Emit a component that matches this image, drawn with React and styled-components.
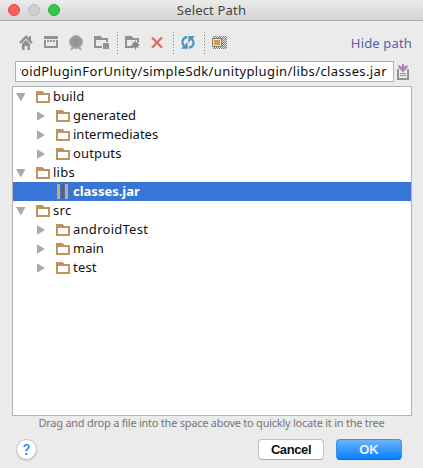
import React from "react";
import styled, { createGlobalStyle, css } from "styled-components";

const GlobalStyle = createGlobalStyle`
  * { box-sizing: border-box; }
  html, body { margin: 0; padding: 0; background: #ebebeb; overflow: hidden; }
  svg { display: block; flex: none; }
`;

const Dialog = styled.main`
  width: 423px;
  height: 468px;
  display: flex;
  flex-direction: column;
  background: #ebebeb;
  color: #111;
  font: 13px/19px "Noto Sans", "Open Sans", sans-serif;
  white-space: nowrap;
  overflow: hidden;
`;

const TitleBar = styled.header`
  height: 21px;
  flex: none;
  display: grid;
  grid-template-columns: 60px 1fr 60px;
  align-items: center;
  padding: 0 8px;
  background: linear-gradient(#ececec, #d4d4d4);
  border-bottom: 1px solid #b1b1b1;
  border-radius: 4px 4px 0 0;
`;

const Lights = styled.div`
  display: flex;
  gap: 8px;
`;

const Light = styled.span`
  width: 12px;
  height: 12px;
  border-radius: 50%;
  background: ${(p) => p.$fill};
  border: 1px solid ${(p) => p.$edge};
`;

const Title = styled.h1`
  margin: 0;
  text-align: center;
  font: 400 13px/20px "Noto Sans", sans-serif;
  letter-spacing: 0.18px;
  color: #444;
`;

const Toolbar = styled.div`
  height: 40px;
  flex: none;
  display: flex;
  align-items: center;
  padding: 4px 11px 0 19px;
`;

const Tool = styled.span`
  display: flex;
  width: 16px;
  height: 16px;
  margin-right: ${(p) => p.$gap ?? 9}px;
`;

const Separator = styled.i`
  width: 1px;
  height: 23px;
  margin-right: ${(p) => p.$gap}px;
  background: repeating-linear-gradient(#858585 0 1px, transparent 1px 3px);
`;

const HidePath = styled.a`
  margin-left: auto;
  color: #5660a5;
  letter-spacing: 0.16px;
`;

const PathRow = styled.div`
  display: flex;
  flex: none;
  height: 21px;
  align-items: center;
  padding-left: 15px;
  gap: 3px;
`;

const PathField = styled.div`
  width: 379px;
  height: 21px;
  padding: 0 6px 0 4px;
  background: #fff;
  border: 1px solid #b0b0b0;
`;

const PathText = styled.span`
  display: flex;
  justify-content: flex-end;
  width: 100%;
  overflow: hidden;
  letter-spacing: 0.38px;
`;

const Tree = styled.ul`
  list-style: none;
  width: 400px;
  height: 330px;
  flex: none;
  margin: 4px 0 0 12px;
  padding: 0;
  background: #fff;
  border: 1px solid #b4b4b4;
`;

const Row = styled.li`
  height: 19px;
  display: flex;
  align-items: center;
  padding-left: ${(p) => 3 + p.$depth * 20}px;
  ${(p) =>
    p.$selected &&
    css`
      background: #3875d7;
      color: #fff;
      font-weight: 700;
    `}
`;

const Name = styled.span`
  margin-left: 3px;
  line-height: 19px;
  letter-spacing: ${(p) => p.$track ?? 0}px;
`;

const Hint = styled.p`
  margin: 0;
  height: 15px;
  text-align: center;
  font-size: 11px;
  line-height: 13px;
  letter-spacing: -0.245px;
  color: #777;
`;

const Footer = styled.footer`
  display: flex;
  align-items: center;
  padding: 8px 21px 0 16px;
  gap: 12px;
`;

const Help = styled.button`
  width: 21px;
  height: 21px;
  padding: 0;
  margin-right: auto;
  border: 1px solid #c2c2c2;
  border-radius: 50%;
  background: #fff;
  box-shadow: 0 1px 1px #ccc;
  color: #1681fb;
  font: 500 14px/18px "Inter", sans-serif;
`;

const Button = styled.button`
  width: 66px;
  height: 21px;
  padding: 0;
  border-radius: 4px;
  border: 1px solid ${(p) => (p.$primary ? "#3e91ed" : "#c0c0c0")};
  border-bottom-color: ${(p) => (p.$primary ? "#0869e0" : "#a9a9a9")};
  background: ${(p) => (p.$primary ? "linear-gradient(#6cb3fa, #087eff)" : "#fff")};
  color: ${(p) => (p.$primary ? "#e9f3ff" : "#111")};
  font: 700 13px/20px "Liberation Sans", sans-serif;
  letter-spacing: ${(p) => (p.$primary ? 0 : -0.4)}px;
`;

const Icon = ({ children, w = 16, h = 16, crisp = true }) => (
  <svg width={w} height={h} viewBox={`0 0 ${w} ${h}`} shapeRendering={crisp ? "crispEdges" : "auto"}>
    {children}
  </svg>
);

const GREY = "#929292";

const HomeIcon = () => (
  <Icon crisp={false}>
    <path d="M1 8 7 1.8 13 8" fill="none" stroke={GREY} strokeWidth="2.4" />
    <path d="M10 1h2v5h-2zM3 8.5l4-4L11 8.5V15H8.5v-4h-3v4H3z" fill={GREY} />
    <path d="M2 9.4 7 4.4l5 5" fill="none" stroke="#d0d0d0" strokeWidth=".8" />
  </Icon>
);

const ProjectIcon = () => (
  <Icon>
    <path d="M0 1h14v3H0zM0 5h2v6h10V5h2v8H0zM3 5h2v2H3zM6 5h2v2H6zM9 5h2v2H9z" fill={GREY} />
  </Icon>
);

const ModuleIcon = () => (
  <Icon crisp={false}>
    <circle cx="7" cy="7" r="6.4" fill="#9a9a9a" stroke="#aaa" />
    <path d="M3 12 1 15h2l2-2zM11 12l2 3h-2l-2-2z" fill="#a4a4a4" />
    <path d="M7 3.8 4.8 6M7 3.8 9.2 6M7 5v6" fill="none" stroke="#8a8a8a" strokeWidth="1" />
  </Icon>
);

const FolderOutline = () => <path d="M0 1h6l2 2h6v4h-2V5H2v6h6v2H0z" fill={GREY} />;

const FolderIcon = () => (
  <Icon>
    <FolderOutline />
    <path d="M9 8h6v6H9z" fill={GREY} />
  </Icon>
);

const NewFolderIcon = () => (
  <Icon>
    <FolderOutline />
    <g shapeRendering="auto">
      <circle cx="10.5" cy="10" r="2.8" fill="#858585" />
      <path d="M10.5 5.5v9M6 10h9M7.3 6.8l6.4 6.4M13.7 6.8l-6.4 6.4" stroke="#858585" />
    </g>
  </Icon>
);

const DeleteIcon = () => (
  <Icon crisp={false}>
    <path d="m2 2.5 10 10.2M12 2.5 2 12.7" stroke="#dd6b5b" strokeWidth="2.3" />
  </Icon>
);

const RefreshIcon = () => (
  <Icon crisp={false}>
    <path d="M6.2 2.2C1.2 2.5.2 8 3.3 11.2" fill="none" stroke="#4e94c0" strokeWidth="2.2" />
    <path d="M0 13.8h6.7V7z" fill="#4e94c0" />
    <path d="M7.8 12.7c5-.3 6-5.8 2.9-9" fill="none" stroke="#4e94c0" strokeWidth="2.2" />
    <path d="M14 1H7.3v6.8z" fill="#4e94c0" />
  </Icon>
);

const HiddenIcon = () => (
  <Icon>
    <defs>
      <pattern id="checks" width="2" height="2" patternUnits="userSpaceOnUse">
        <path d="M0 0h1v1H0zM1 1h1v1H1z" fill="#777" />
      </pattern>
    </defs>
    <path d="M1 1h14v13H1z" fill="url(#checks)" />
    <path d="M0 3h10v9H0z" fill="#817b76" />
    <path d="M1 4h8v7H1z" fill="#eee1c9" />
    <path d="M2 5h6v5H2z" fill="#d09a52" />
  </Icon>
);

const HistoryIcon = () => (
  <Icon w={12} h={17}>
    <path d="M0 6h2v9h8V6h2v11H0zM3 10h6v1H3zM3 12h6v1H3z" fill="#929292" />
    <path d="M5 1h2v3l3-2 1 2-5 5.5L1 4l1-2 3 2z" fill="#a784bd" shapeRendering="auto" />
  </Icon>
);

const TreeFolder = () => (
  <Icon w={14} h={12}>
    <path d="M0 0h6l2 2h6v10H0zM2 4v6h10V4z" fill="#bd965f" fillRule="evenodd" />
  </Icon>
);

const JarIcon = () => (
  <Icon w={14} h={15}>
    <defs>
      <pattern id="zip" width="2" height="2" patternUnits="userSpaceOnUse">
        <path d="M0 0h1v1H0zM1 1h1v1H1z" fill="#50555f" />
      </pattern>
    </defs>
    <path d="M1 0h3v15H1zM9 0h3v15H9z" fill="#cda777" />
    <path d="M5 0h3v15H5z" fill="url(#zip)" />
  </Icon>
);

const Arrow = ({ state }) => (
  <Icon w={20} h={10} crisp={false}>
    {state === "open" && <path d="M0 1h9.5L4.8 9.5z" fill="#aaa" />}
    {state === "closed" && <path d="M1 .2 9 5 1 9.8z" fill="#aaa" />}
  </Icon>
);

const rows = [
  { name: "build", depth: 0, state: "open", track: 0.15 },
  { name: "generated", depth: 1, state: "closed" },
  { name: "intermediates", depth: 1, state: "closed" },
  { name: "outputs", depth: 1, state: "closed", track: 0.15 },
  { name: "libs", depth: 0, state: "open", track: 0.25 },
  { name: "classes.jar", depth: 1, state: "none", selected: true },
  { name: "src", depth: 0, state: "open", track: 0.3 },
  { name: "androidTest", depth: 1, state: "closed", track: 0.27 },
  { name: "main", depth: 1, state: "closed" },
  { name: "test", depth: 1, state: "closed", track: 0.2 },
];

export default function App() {
  return (
    <>
      <GlobalStyle />
      <Dialog>
        <TitleBar>
          <Lights>
            <Light $fill="#fc605c" $edge="#df4845" />
            <Light $fill="#d0d0d0" $edge="#b8b8b8" />
            <Light $fill="#34c84a" $edge="#24ae38" />
          </Lights>
          <Title>Select Path</Title>
        </TitleBar>
        <Toolbar>
          <Tool><HomeIcon /></Tool>
          <Tool><ProjectIcon /></Tool>
          <Tool><ModuleIcon /></Tool>
          <Tool $gap={7}><FolderIcon /></Tool>
          <Separator $gap={7} />
          <Tool><NewFolderIcon /></Tool>
          <Tool $gap={7}><DeleteIcon /></Tool>
          <Separator $gap={7} />
          <Tool $gap={7}><RefreshIcon /></Tool>
          <Separator $gap={7} />
          <Tool $gap={0}><HiddenIcon /></Tool>
          <HidePath>Hide path</HidePath>
        </Toolbar>
        <PathRow>
          <PathField>
            <PathText>roidPluginForUnity/simpleSdk/unityplugin/libs/classes.jar</PathText>
          </PathField>
          <HistoryIcon />
        </PathRow>
        <Tree>
          {rows.map((r) => (
            <Row key={r.name} $depth={r.depth} $selected={r.selected}>
              <Arrow state={r.state} />
              {r.selected ? <JarIcon /> : <TreeFolder />}
              <Name $track={r.track}>{r.name}</Name>
            </Row>
          ))}
        </Tree>
        <Hint>Drag and drop a file into the space above to quickly locate it in the tree</Hint>
        <Footer>
          <Help>?</Help>
          <Button>Cancel</Button>
          <Button $primary>OK</Button>
        </Footer>
      </Dialog>
    </>
  );
}
